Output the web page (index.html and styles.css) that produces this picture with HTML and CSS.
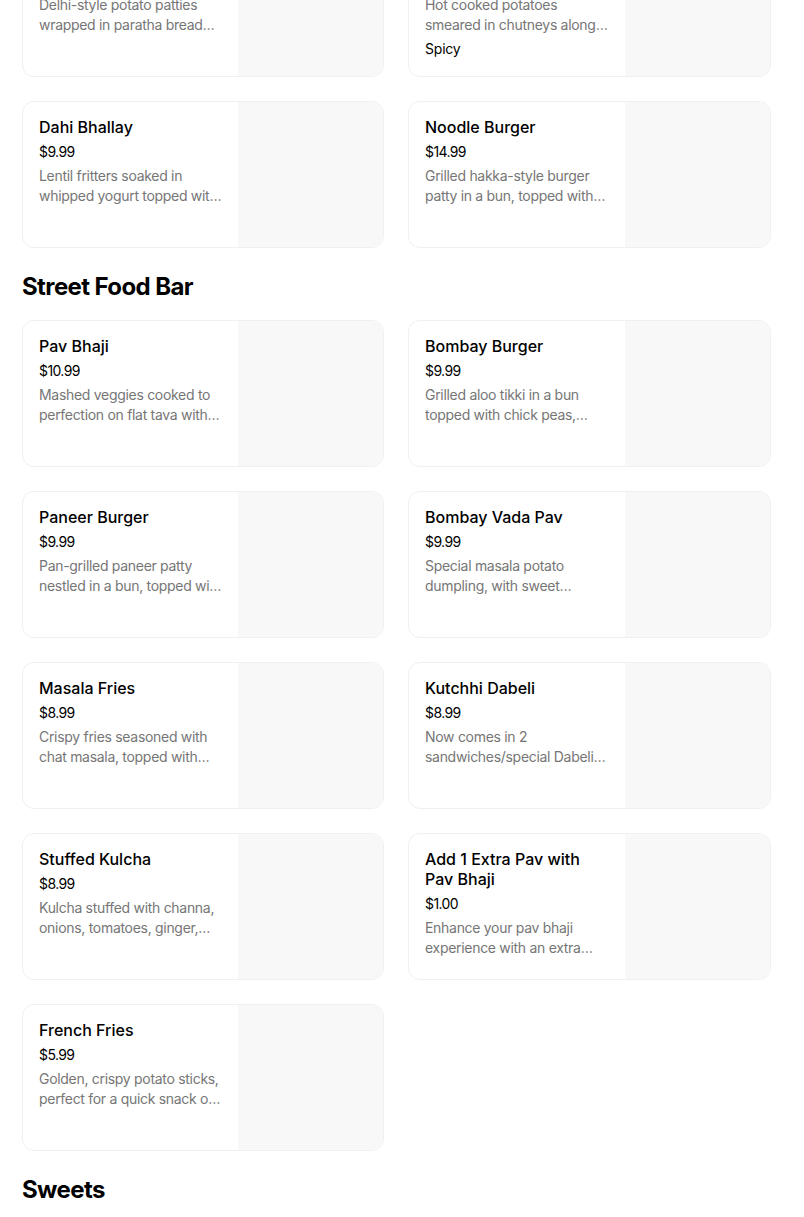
FILE: index.html
```html
<!DOCTYPE html>
<html lang="en">
<head>
<meta charset="utf-8">
<title>Menu</title>
<link rel="stylesheet" href="styles.css">
</head>
<body>
<main class="page">
  <section class="section">
    <div class="grid">
      <article class="card">
        <div class="info">
          <h3 class="name">Aloo Paratha Roll</h3>
          <div class="price">$9.99</div>
          <p class="desc">Delhi-style potato patties wrapped in paratha bread with onions and chutneys</p>
        </div>
        <div class="thumb"></div>
      </article>
      <article class="card">
        <div class="info">
          <h3 class="name">Aloo Chaat</h3>
          <div class="price">$8.99</div>
          <p class="desc">Hot cooked potatoes smeared in chutneys along with spices and herbs</p>
          <div class="tag">Spicy</div>
        </div>
        <div class="thumb"></div>
      </article>
      <article class="card">
        <div class="info">
          <h3 class="name">Dahi Bhallay</h3>
          <div class="price">$9.99</div>
          <p class="desc">Lentil fritters soaked in whipped yogurt topped with sweet and tangy chutneys</p>
        </div>
        <div class="thumb"></div>
      </article>
      <article class="card">
        <div class="info">
          <h3 class="name">Noodle Burger</h3>
          <div class="price">$14.99</div>
          <p class="desc">Grilled hakka-style burger patty in a bun, topped with sauces and veggies</p>
        </div>
        <div class="thumb"></div>
      </article>
    </div>
  </section>

  <section class="section">
    <h2 class="heading">Street Food Bar</h2>
    <div class="grid">
      <article class="card">
        <div class="info">
          <h3 class="name">Pav Bhaji</h3>
          <div class="price">$10.99</div>
          <p class="desc">Mashed veggies cooked to perfection on flat tava with butter and spices</p>
        </div>
        <div class="thumb"></div>
      </article>
      <article class="card">
        <div class="info">
          <h3 class="name">Bombay Burger</h3>
          <div class="price">$9.99</div>
          <p class="desc">Grilled aloo tikki in a bun topped with chick peas, onions and chutneys</p>
        </div>
        <div class="thumb"></div>
      </article>
      <article class="card">
        <div class="info">
          <h3 class="name">Paneer Burger</h3>
          <div class="price">$9.99</div>
          <p class="desc">Pan-grilled paneer patty nestled in a bun, topped with fresh veggies</p>
        </div>
        <div class="thumb"></div>
      </article>
      <article class="card">
        <div class="info">
          <h3 class="name">Bombay Vada Pav</h3>
          <div class="price">$9.99</div>
          <p class="desc">Special masala potato dumpling, with sweet chutney and garlic chutney</p>
        </div>
        <div class="thumb"></div>
      </article>
      <article class="card">
        <div class="info">
          <h3 class="name">Masala Fries</h3>
          <div class="price">$8.99</div>
          <p class="desc">Crispy fries seasoned with chat masala, topped with chutneys</p>
        </div>
        <div class="thumb"></div>
      </article>
      <article class="card">
        <div class="info">
          <h3 class="name">Kutchhi Dabeli</h3>
          <div class="price">$8.99</div>
          <p class="desc">Now comes in 2 sandwiches/special Dabeli masala with peanuts</p>
        </div>
        <div class="thumb"></div>
      </article>
      <article class="card">
        <div class="info">
          <h3 class="name">Stuffed Kulcha</h3>
          <div class="price">$8.99</div>
          <p class="desc">Kulcha stuffed with channa, onions, tomatoes, ginger, and spices</p>
        </div>
        <div class="thumb"></div>
      </article>
      <article class="card">
        <div class="info">
          <h3 class="name">Add 1 Extra Pav with Pav Bhaji</h3>
          <div class="price">$1.00</div>
          <p class="desc">Enhance your pav bhaji experience with an extra pav, buttered and toasted on the tava</p>
        </div>
        <div class="thumb"></div>
      </article>
      <article class="card">
        <div class="info">
          <h3 class="name">French Fries</h3>
          <div class="price">$5.99</div>
          <p class="desc">Golden, crispy potato sticks, perfect for a quick snack or side</p>
        </div>
        <div class="thumb"></div>
      </article>
    </div>
  </section>

  <section class="section">
    <h2 class="heading">Sweets</h2>
  </section>
</main>
</body>
</html>
```
FILE: styles.css
```css
* { box-sizing: border-box; }
html, body { margin: 0; padding: 0; background: #fff; }
body {
  font-family: Inter, "Noto Sans", "Liberation Sans", sans-serif;
  color: #000;
  overflow: hidden;
}
.page {
  width: 749px;
  margin: -70px 0 0 22px;
  display: flex;
  flex-direction: column;
  gap: 24px;
}
.section { display: flex; flex-direction: column; }
.heading {
  margin: -1px 0 17px;
  font-size: 24px;
  line-height: 32px;
  font-weight: 700;
  letter-spacing: -0.6px;
}
.grid {
  display: grid;
  grid-template-columns: 362px 363px;
  column-gap: 24px;
  row-gap: 24px;
}
.card {
  height: 147px;
  border: 1px solid #f0f0f0;
  border-radius: 12px;
  display: flex;
  overflow: hidden;
  background: #fff;
}
.info {
  flex: 1;
  min-width: 0;
  padding: 15px 16px 16px 16px;
  display: flex;
  flex-direction: column;
  gap: 4px;
}
.name {
  margin: 0 0 1px;
  font-size: 16px;
  line-height: 20px;
  font-weight: 500;
  color: #000;
  letter-spacing: 0;
}
.price {
  font-size: 14px;
  line-height: 20px;
  color: #000;
  letter-spacing: -0.6px;
}
.desc {
  margin: 0;
  font-size: 14px;
  line-height: 20px;
  color: #767676;
  letter-spacing: -0.3px;
  display: -webkit-box;
  -webkit-line-clamp: 2;
  -webkit-box-orient: vertical;
  overflow: hidden;
}
.tag {
  font-size: 14px;
  line-height: 20px;
  color: #000;
  letter-spacing: -0.2px;
}
.thumb {
  flex: 0 0 145px;
  height: 145px;
  background: #f8f8f8;
}
```
